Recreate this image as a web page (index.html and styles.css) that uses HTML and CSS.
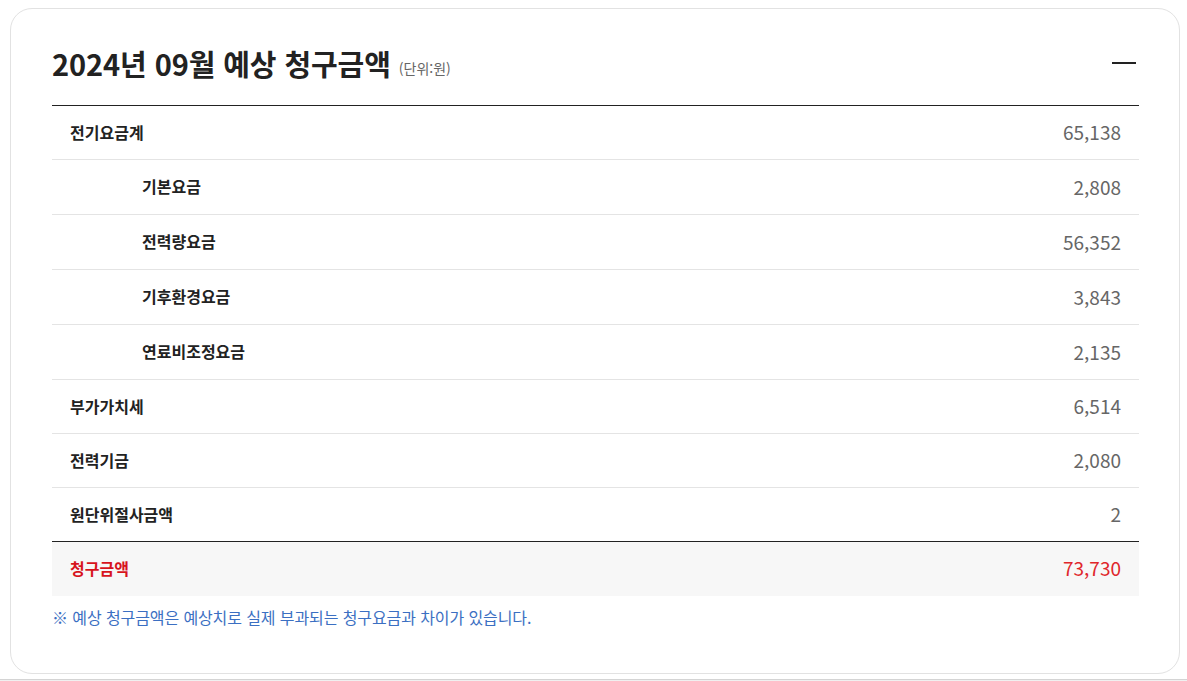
FILE: index.html
```html
<!DOCTYPE html>
<html lang="ko">
<head>
<meta charset="utf-8">
<link rel="stylesheet" href="styles.css">
</head>
<body>
<div class="page">
  <section class="card">
    <header class="card-head">
      <h2 class="title">2024년 09월 예상 청구금액 <span class="unit">(단위:원)</span></h2>
      <button class="toggle" aria-label="접기"><span class="minus"></span></button>
    </header>
    <table class="bill">
      <tbody>
        <tr><th>전기요금계</th><td>65,138</td></tr>
        <tr class="sub"><th>기본요금</th><td>2,808</td></tr>
        <tr class="sub"><th>전력량요금</th><td>56,352</td></tr>
        <tr class="sub"><th>기후환경요금</th><td>3,843</td></tr>
        <tr class="sub"><th>연료비조정요금</th><td>2,135</td></tr>
        <tr><th>부가가치세</th><td>6,514</td></tr>
        <tr><th>전력기금</th><td>2,080</td></tr>
        <tr class="last"><th>원단위절사금액</th><td>2</td></tr>
        <tr class="total"><th>청구금액</th><td>73,730</td></tr>
      </tbody>
    </table>
    <p class="note">※ 예상 청구금액은 예상치로 실제 부과되는 청구요금과 차이가 있습니다.</p>
  </section>
</div>
<div class="below"></div>
</body>
</html>
```
FILE: styles.css
```css
* { box-sizing: border-box; }
html, body { margin: 0; padding: 0; background: #fff; }
body {
  font-family: "Noto Sans CJK KR", "Noto Sans", sans-serif;
  color: #222;
  width: 1187px;
  height: 681px;
  overflow: hidden;
}
.page {
  padding: 8px 7px 0 10px;
  height: 679px;
}
.card {
  border: 1px solid #e2e2e2;
  border-radius: 22px;
  height: 666px;
  padding: 0 40px 0 41px;
}
.card-head {
  display: flex;
  align-items: center;
  justify-content: space-between;
  height: 96px;
  padding-top: 12px;
}
.title {
  margin: 0;
  font-size: 29px;
  font-weight: 700;
  letter-spacing: -0.1px;
  color: #222;
}
.unit {
  font-size: 14px;
  font-weight: 400;
  color: #666;
  letter-spacing: 0;
  vertical-align: 2px;
}
.toggle {
  border: 0;
  background: none;
  padding: 0;
  width: 24px;
  height: 20px;
  margin-right: 3px;
  display: flex;
  align-items: center;
}
.minus {
  display: block;
  width: 24px;
  height: 2px;
  background: #222;
}
.bill {
  width: 100%;
  border-collapse: collapse;
  border-top: 1px solid #222;
}
.bill tr { border-bottom: 1px solid #e4e4e4; }
.bill th, .bill td {
  height: 54px;
  padding: 0 18px 2px;
  vertical-align: middle;
}
.bill tr.sub th, .bill tr.sub td { height: 55px; }
.bill th {
  text-align: left;
  font-size: 16px;
  letter-spacing: 0;
  font-weight: 700;
  color: #222;
}
.bill tr.sub th { padding-left: 90px; }
.bill td {
  text-align: right;
  font-size: 19px;
  font-weight: 400;
  color: #666;
}
.bill tr.last { border-bottom: 1px solid #222; }
.bill tr.total { background: #f7f7f7; border-bottom: 0; }
.bill tr.total th { color: #d7141d; }
.bill tr.total td { color: #e0262b; }
.note {
  margin: 9px 0 0;
  font-size: 16px;
  color: #3b6fc2;
  letter-spacing: -0.1px;
}
.below {
  height: 2px;
  border-top: 1px solid #d4d4d4;
  background: #f0f0f0;
}
```
